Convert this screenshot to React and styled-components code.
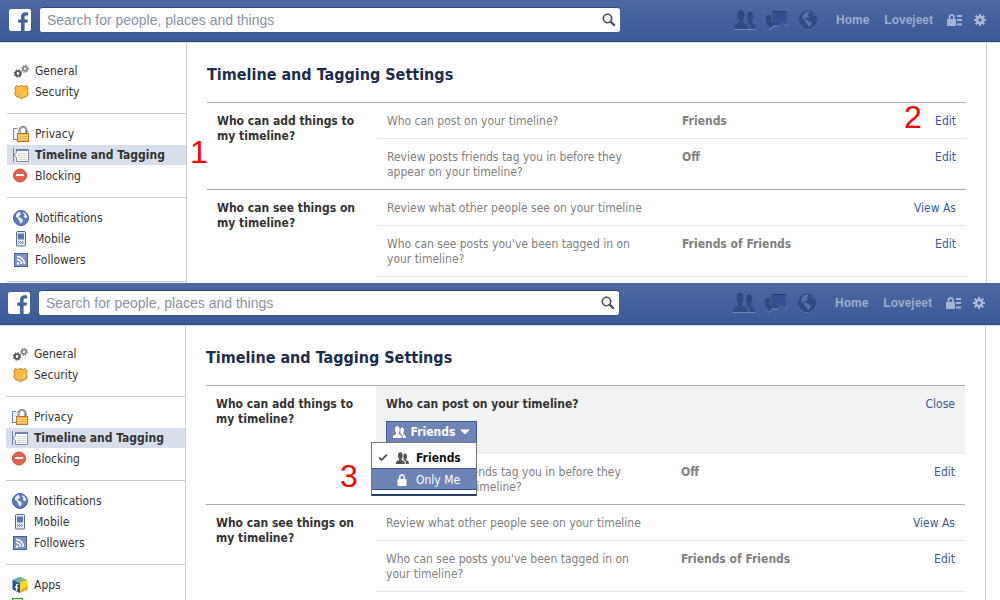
import { useState } from 'react';
import styled, { createGlobalStyle, css } from 'styled-components';

const GlobalStyle = createGlobalStyle`
  * {
    box-sizing: border-box;
  }
  body {
    margin: 0;
    background: #fff;
    color: #333;
    font-family: 'DejaVu Sans Condensed', 'DejaVu Sans', sans-serif;
    font-size: 12px;
    line-height: 15px;
  }
  a {
    color: #3b5998;
    text-decoration: none;
  }
  svg {
    display: block;
    flex: none;
  }
`;

const Page = styled.div`
  height: 100vh;
  overflow: hidden;
`;

const Pane = styled.section`
  position: relative;
`;

const Header = styled.header`
  display: flex;
  align-items: center;
  height: 42px;
  padding: 0 ${(props) => props.$right}px 1px ${(props) => props.$left}px;
  background: linear-gradient(#4e69a2, #3b5998);
  border-bottom: 1px solid #29487d;
  box-shadow: 0 1px 0 #dcdfe8;
`;

const LogoLink = styled.a`
  display: block;
  width: 22px;
  height: 22px;
  margin-right: 9px;
  border-radius: 2px;
  overflow: hidden;
`;

const SearchForm = styled.form`
  display: flex;
  flex: 0 1 580px;
  height: 26px;
  background: #fff;
  border-top: 1px solid #2c467e;
  border-bottom: 1px solid #3b5590;
  border-radius: 3px;
`;

const SearchInput = styled.input`
  flex: 1;
  min-width: 0;
  padding: 0 7px;
  border: 0;
  outline: 0;
  background: none;
  font-family: 'Liberation Sans', Arial, sans-serif;
  font-size: 14px;
  &::placeholder {
    color: #8a92a3;
    opacity: 1;
  }
`;

const SearchButton = styled.button`
  display: flex;
  align-items: center;
  padding: 0 4px;
  border: 0;
  background: none;
  cursor: pointer;
`;

const TopNav = styled.nav`
  display: flex;
  align-items: center;
  margin-left: auto;
`;

const Jewels = styled.div`
  display: flex;
  align-items: center;
  gap: 10px;
  margin-right: 18px;
`;

const NavLinks = styled.div`
  display: flex;
  align-items: center;
  gap: 15px;
  margin-right: 14px;
`;

const NavTools = styled.div`
  display: flex;
  align-items: center;
  gap: 12px;
`;

const NavLink = styled.a`
  color: #9cacce;
  font-family: 'Liberation Sans', Arial, sans-serif;
  font-weight: bold;
`;

const IconLink = styled.a`
  display: block;
`;

const Body = styled.div`
  display: flex;
  margin-right: ${(props) => props.$right}px;
  padding-left: ${(props) => props.$left}px;
  border-right: 1px solid #ccc;
`;

const Sidebar = styled.nav`
  flex: 0 0 180px;
  padding: 9px 0 1px;
  border-right: 1px solid #ccc;
`;

const SideGroup = styled.ul`
  display: flex;
  flex-direction: column;
  gap: 1px;
  margin: 0;
  padding: 10px 0 11px;
  border-bottom: 1px solid #ccc;
  list-style: none;
`;

const SideLink = styled.a`
  display: flex;
  align-items: center;
  gap: 6px;
  height: 20px;
  padding-left: 6px;
  color: #333;
  ${(props) =>
    props.$active &&
    css`
      background: #d8dfea;
      font-weight: bold;
    `}
`;

const Main = styled.main`
  flex: 1;
  min-width: 0;
  padding: 23px 20px 0;
`;

const Title = styled.h1`
  margin: 0 0 17px;
  color: #1e2d4c;
  font-size: 16px;
  line-height: 20px;
`;

const Group = styled.section`
  display: flex;
  border-top: 1px solid #aaa;
`;

const GroupTitle = styled.h2`
  flex: 0 0 170px;
  margin: 0;
  padding: 11px 10px 0;
  font-size: 12px;
  line-height: 15px;
`;

const Rows = styled.div`
  flex: 1;
  min-width: 0;
`;

const Row = styled.div`
  display: grid;
  grid-template-columns: 265px 1fr auto;
  column-gap: 30px;
  padding: 11px 10px 9px;
  color: #808080;
  & + & {
    border-top: 1px solid #e9e9e9;
  }
`;

const LastLine = styled.div`
  border-top: 1px solid #e9e9e9;
`;

const Value = styled.strong`
  color: #808080;
`;

const OpenRow = styled.div`
  padding: 11px 10px 10px;
  background: #f2f2f2;
  border-bottom: 1px solid #e9e9e9;
`;

const OpenHead = styled.div`
  display: flex;
  justify-content: space-between;
  margin-bottom: 9px;
`;

const Audience = styled.div`
  position: relative;
  width: 91px;
`;

const AudienceButton = styled.button`
  display: flex;
  align-items: center;
  justify-content: space-between;
  width: 100%;
  height: 22px;
  padding: 0 6px;
  border: 1px solid #3b5998;
  background: #6d84b4;
  color: #fff;
  font: inherit;
  font-weight: bold;
  cursor: pointer;
`;

const Menu = styled.div`
  position: absolute;
  z-index: 2;
  top: 21px;
  right: 0;
  width: 106px;
  padding: 3px 0 4px;
  border: 1px solid #777;
  border-bottom: 2px solid #293e6a;
  background: #fff;
`;

const MenuItem = styled.button`
  display: grid;
  grid-template-columns: 10px 13px 1fr;
  column-gap: 7px;
  align-items: center;
  width: 100%;
  height: 22px;
  padding: 2px 0 0 7px;
  border: 1px solid transparent;
  border-width: 1px 0;
  background: none;
  color: #555;
  font: inherit;
  font-weight: ${(props) => (props.$checked ? 'bold' : 'normal')};
  text-align: left;
  cursor: pointer;
  ${(props) =>
    props.$hot &&
    css`
      border-color: #3b5998;
      background: #6d84b4;
      color: #fff;
    `}
`;

const MenuLabel = styled.span`
  color: ${(props) => (props.$hot ? '#fff' : '#111')};
`;

const Step = styled.span`
  position: absolute;
  z-index: 3;
  top: ${(props) => props.$top}px;
  left: ${(props) => props.$left};
  color: #f00;
  font-family: 'Liberation Sans', Arial, sans-serif;
  font-size: 32px;
  line-height: 32px;
`;

const LogoIcon = () => (
  <svg width='22' height='22' viewBox='0 0 22 22'>
    <rect width='22' height='22' rx='1' fill='#fff' />
    <path
      d='M12 22v-8.200H9.200v-3.300H12V8c0-3 1.700-4.700 4.500-4.700h2.500v3.300h-1.700c-1.300 0-1.700.6-1.700 1.700v2.200h3.300l-.5 3.300h-2.800V22z'
      fill='#4561a0'
    />
  </svg>
);

const SearchIcon = () => (
  <svg width='14' height='14' viewBox='0 0 14 14' fill='none' stroke='#4a4a4a'>
    <circle cx='5.500' cy='5.500' r='4.200' strokeWidth='1.600' />
    <path d='M8.800 8.800l4 4' strokeWidth='2.200' />
  </svg>
);

const FriendsJewel = () => (
  <svg width='22' height='20' viewBox='0 0 22 20'>
    <path d='M0 19.500h22' stroke='#6f86b8' />
    <g fill='#304a86'>
      <path d='M13.500 12.500c0-1.100 1-1.300 1.200-2-1.200-1-1.700-2.400-1.700-4 0-2.500 1.300-4.500 3.200-4.500s3.200 2 3.200 4.500c0 1.600-.5 3-1.600 4v2c1.100 1.400 4.200 1.700 4.200 4.500v2h-5c0-3-.6-4.600-3.500-6.500z' />
      <path d='M0 19v-2c0-3 3.600-3.300 5-4.800v-2.400C4 8.800 3.500 7.200 3.500 5c0-3 1.300-4.500 3.500-4.500S10.500 2 10.500 5c0 2.200-.5 3.800-1.500 4.800v2.400c1.400 1.500 5.200 1.800 5.200 4.800v2z' />
    </g>
    <path d='M4.500 2Q5.500 .7 7 .7t2.500 1.300M14 3.500q1-1.200 2.200-1.200t2.200 1.200' fill='none' stroke='#24396c' />
  </svg>
);

const ChatJewel = () => (
  <svg width='22' height='20' viewBox='0 0 22 20'>
    <path d='M3 19.500l5-3.500h5M17 13l4 3.500V13' fill='none' stroke='#6f86b8' />
    <path
      d='M1.500 5.500H5v7h9V15H7.500L3 19v-4H1.500Q0 15 0 13.500V7Q0 5.500 1.500 5.500z'
      fill='#304a86'
    />
    <path
      d='M7.500 1h12Q21 1 21 2.500v8q0 1.500-.5 1.500v4L16 12.500H7.500Q6 12.500 6 11V2.500Q6 1 7.500 1z'
      fill='#34508e'
    />
    <path d='M6.500 1.500h14M.5 6H5' stroke='#24396c' />
  </svg>
);

const GlobeJewel = () => (
  <svg width='20' height='20' viewBox='0 0 20 20'>
    <circle cx='10' cy='10.500' r='9.200' fill='#6f86b8' />
    <circle cx='10' cy='9.800' r='9.300' fill='#304a86' />
    <path
      d='M5 4.500L8 2l3.500-.6-.5 2L9.500 5 11 6.500 9 8 7 7.500 6.500 9l2.700.8 1.300 1.300 3.300 1.200-.8 3-2.200 1.700-1.600-3.100-2-2.200.4-1.200-3.100-2z'
      fill='#5a74ad'
    />
    <path d='M14 2.800l3 3' stroke='#5a74ad' />
  </svg>
);

const LockListIcon = () => (
  <svg width='15' height='12' viewBox='0 0 15 12'>
    <path d='M2.500 5.500V3.500a2.200 2.500 0 0 1 4.500 0v2' fill='none' stroke='#a5b3d2' strokeWidth='1.700' />
    <path d='M0 5h9v7H0zM10 1h5v2h-5zM10 5h5v2h-5zM10 9.500h5v2h-5z' fill='#a5b3d2' />
  </svg>
);

const GearIcon = () => (
  <svg width='12' height='12' viewBox='0 0 12 12' fill='none' stroke='#b0bcd8'>
    <circle cx='6' cy='6' r='2.900' strokeWidth='2.200' />
    <path
      d='M6 0v2.500M6 9.500V12M0 6h2.500M9.500 6H12M1.700 1.700l1.800 1.800M8.500 8.500l1.800 1.800M10.300 1.700L8.500 3.500M3.500 8.500l-1.800 1.800'
      strokeWidth='2'
    />
  </svg>
);

const GeneralIcon = () => (
  <svg width='16' height='16' viewBox='0 0 16 16' fill='none'>
    <g stroke='#555'>
      <circle cx='5' cy='10.500' r='2.300' strokeWidth='1.800' />
      <circle cx='5' cy='10.500' r='3.500' strokeWidth='1.400' strokeDasharray='1.400 1.350' />
    </g>
    <g stroke='#888'>
      <circle cx='12' cy='5.800' r='2.100' strokeWidth='1.800' />
      <circle cx='12' cy='5.800' r='3.300' strokeWidth='1.300' strokeDasharray='1.300 1.290' />
    </g>
  </svg>
);

const SecurityIcon = () => (
  <svg width='16' height='16' viewBox='0 0 16 16'>
    <path
      d='M3.500 1.500l2 1 3-1 3 1 2-1 1.700 2.800-.9 2.200.9 3.500-1.500 2.500-3.200.9-2 1.600-2-1.600-3.200-.9-1.500-2.500.9-3.500-.9-2.200z'
      fill='#fbb83c'
      stroke='#c08433'
    />
    <path d='M9 12l4-6.500v5z' fill='#fdd374' />
  </svg>
);

const PrivacyIcon = () => (
  <svg width='16' height='16' viewBox='0 0 16 16'>
    <path d='M4.500 2.500h-4v11h4' fill='#eef2fa' stroke='#6d84b4' />
    <path d='M6.500 8V4.500a3.500 3.500 0 0 1 7 0V8' fill='none' stroke='#666' strokeWidth='2' />
    <path d='M6.500 7.500V4.500a3.500 3.500 0 0 1 7 0' fill='none' stroke='#ddd' strokeWidth='.7' />
    <rect x='4.500' y='7.500' width='11' height='8' fill='#fcb53a' stroke='#b5762b' />
    <path d='M5 9.500h10M5 11.500h10M5 13.500h10' stroke='#fbd583' />
  </svg>
);

const TimelineIcon = () => (
  <svg width='16' height='16' viewBox='0 0 16 16'>
    <path d='M.5 1v14' stroke='#6d84b4' />
    <path d='M3.500 2.500h12v12h-12v-4L1 8l2.500-2.500z' fill='#fff' stroke='#8a8a8a' />
    <path d='M3 3h13' stroke='#6d84b4' strokeWidth='2' />
    <path d='M5 6.500h9M5 8.500h9M5 10.500h9M5 12.500h9' stroke='#d5d5d5' />
  </svg>
);

const BlockingIcon = () => (
  <svg width='16' height='16' viewBox='0 0 16 16'>
    <circle cx='7' cy='7.500' r='6.500' fill='#e2604b' stroke='#cb4a3c' />
    <rect x='3' y='6' width='8' height='2' fill='#fff' />
  </svg>
);

const NotificationsIcon = () => (
  <svg width='16' height='16' viewBox='0 0 16 16'>
    <circle cx='8' cy='8' r='7.500' fill='#5f7ab5' stroke='#47619f' />
    <path
      d='M3 4.500L5 2.500l2.500-.8L7 3l1.200 1.200-2 1.800-.7 1.300 2.300.8 2 1.600-.3 1.800-2 2.500-1-3-1.200-1.700L5 8 3 7zM10.500 2L13 4l1.300 3-1.500 1.500L11 7l.3-2.500-1.300-1z'
      fill='#e9eef8'
    />
  </svg>
);

const MobileIcon = () => (
  <svg width='16' height='16' viewBox='0 0 16 16'>
    <rect x='3.500' y='.5' width='9' height='14.500' rx='1' fill='#e8edf6' stroke='#53698f' />
    <rect x='5' y='2.500' width='6' height='6' fill='#5c7ab8' />
    <path d='M5 10.500h6M5 12.500h6' stroke='#7184a8' strokeDasharray='1 1' />
    <path d='M6 11.500h5' stroke='#7184a8' strokeDasharray='1 1' />
  </svg>
);

const FollowersIcon = () => (
  <svg width='16' height='16' viewBox='0 0 16 16'>
    <rect x='1.500' y='1.500' width='13' height='13' fill='#7d92c0' stroke='#4a629c' />
    <circle cx='5' cy='11.500' r='1.300' fill='#fff' />
    <path d='M4 7.500a4.500 4.500 0 0 1 4.500 4.500M4 4.500a7.500 7.500 0 0 1 7.500 7.500' fill='none' stroke='#fff' strokeWidth='1.600' />
  </svg>
);

const AppsIcon = () => (
  <svg width='16' height='16' viewBox='0 0 16 16'>
    <path d='M8 0l7.500 3L8 6 .5 3z' fill='#7fc241' />
    <path d='M8 0L.5 3l4 1.600L11 1.200z' fill='#4fa8d8' />
    <path d='M.5 3L8 6v10l-7.500-3.500z' fill='#2f4f93' />
    <path d='M15.500 3L8 6v10l7.500-3.500z' fill='#fbd91c' />
    <path d='M15.500 8.500v4L8 16v-2z' fill='#f2a81d' />
    <path d='M6.300 7.500q-1.800-.6-1.800 1.300v5M3 9.800l3 1' fill='none' stroke='#fff' strokeWidth='1.300' />
  </svg>
);

const AdsIcon = () => (
  <svg width='16' height='16' viewBox='0 0 16 16'>
    <rect x='.5' y='.5' width='10' height='14' fill='#d5edc2' stroke='#3f8f2b' />
    <path d='M3 4h5M3 7h5M3 10h5' stroke='#3f8f2b' />
  </svg>
);

const FriendsIcon = () => (
  <svg width='13' height='12' viewBox='0 0 13 12' fill='currentColor'>
    <path d='M0 12v-1.500c0-1.500 2-1.600 3-2.500V6.700C2.300 6 2 5 2 3.500 2 1.500 2.800.3 4.300.3S6.600 1.500 6.600 3.500C6.600 5 6.300 6 5.600 6.700V8c1 .9 3.200 1 3.200 2.500V12z' />
    <path d='M7.300 7.500l.5-.5c-.5-.6-.4-1-.4-2.500 0-1.700.5-2.900 1.700-2.900s1.900 1 1.900 2.900c0 1.400-.3 2-.8 2.600V8c.8.8 2.600 1 2.600 2.400V12H9.800v-1.500C9.800 9 8.600 8.500 7.300 7.500z' />
  </svg>
);

const LockIcon = () => (
  <svg width='13' height='12' viewBox='0 0 13 12'>
    <path d='M3.700 6V3.500a2.300 2.500 0 0 1 4.600 0V6' fill='none' stroke='currentColor' strokeWidth='1.500' />
    <rect x='1.500' y='5' width='9' height='7' rx='1' fill='currentColor' />
  </svg>
);

const CheckIcon = () => (
  <svg width='10' height='9' viewBox='0 0 10 9' fill='none' stroke='#555' strokeWidth='1.800'>
    <path d='M0 3.500L2.500 6 8 .5' />
  </svg>
);

const CaretIcon = () => (
  <svg width='10' height='6' viewBox='0 0 10 6'>
    <path d='M0 .5h10L5 5.500z' fill='#fff' />
  </svg>
);

const sideGroups = [
  [
    { id: 'general', label: 'General', Icon: GeneralIcon },
    { id: 'security', label: 'Security', Icon: SecurityIcon },
  ],
  [
    { id: 'privacy', label: 'Privacy', Icon: PrivacyIcon },
    { id: 'tagging', label: 'Timeline and Tagging', Icon: TimelineIcon },
    { id: 'blocking', label: 'Blocking', Icon: BlockingIcon },
  ],
  [
    { id: 'notifications', label: 'Notifications', Icon: NotificationsIcon },
    { id: 'mobile', label: 'Mobile', Icon: MobileIcon },
    { id: 'followers', label: 'Followers', Icon: FollowersIcon },
  ],
];

const moreGroup = [
  { id: 'apps', label: 'Apps', Icon: AppsIcon },
  { id: 'ads', Icon: AdsIcon },
];

const audiences = [
  { id: 'friends', label: 'Friends', Icon: FriendsIcon },
  { id: 'me', label: 'Only Me', Icon: LockIcon },
];

const TopBar = ({ left, right }) => (
  <Header $left={left + 2} $right={right + 1}>
    <LogoLink href='#' aria-label='Facebook'>
      <LogoIcon />
    </LogoLink>
    <SearchForm onSubmit={(e) => e.preventDefault()}>
      <SearchInput
        type='text'
        aria-label='Search'
        placeholder='Search for people, places and things'
      />
      <SearchButton type='submit' aria-label='Search'>
        <SearchIcon />
      </SearchButton>
    </SearchForm>
    <TopNav>
      <Jewels>
        <IconLink href='#' aria-label='Friend requests'>
          <FriendsJewel />
        </IconLink>
        <IconLink href='#' aria-label='Messages'>
          <ChatJewel />
        </IconLink>
        <IconLink href='#' aria-label='Notifications'>
          <GlobeJewel />
        </IconLink>
      </Jewels>
      <NavLinks>
        <NavLink href='#'>Home</NavLink>
        <NavLink href='#'>Lovejeet</NavLink>
      </NavLinks>
      <NavTools>
        <IconLink href='#' aria-label='Privacy shortcuts'>
          <LockListIcon />
        </IconLink>
        <IconLink href='#' aria-label='Settings'>
          <GearIcon />
        </IconLink>
      </NavTools>
    </TopNav>
  </Header>
);

const SideMenu = ({ groups }) => (
  <Sidebar>
    {groups.map((group) => (
      <SideGroup key={group[0].id}>
        {group.map(({ id, label, Icon }) => (
          <li key={id}>
            <SideLink href='#' aria-label={label || id} $active={id === 'tagging'}>
              <Icon />
              {label}
            </SideLink>
          </li>
        ))}
      </SideGroup>
    ))}
  </Sidebar>
);

const Setting = ({ text, value, action = 'Edit' }) => (
  <Row>
    <span>{text}</span>
    <Value>{value}</Value>
    <a href='#'>{action}</a>
  </Row>
);

const AudiencePicker = () => {
  const [open, setOpen] = useState(true);
  const [selected, setSelected] = useState('friends');
  const [hot, setHot] = useState('me');
  const current = audiences.find((item) => item.id === selected);

  const handlePick = (id) => {
    setSelected(id);
    setOpen(false);
  };

  return (
    <Audience>
      <AudienceButton
        type='button'
        aria-haspopup='menu'
        aria-expanded={open}
        onClick={() => setOpen(!open)}
      >
        <current.Icon />
        {current.label}
        <CaretIcon />
      </AudienceButton>
      {open && (
        <Menu role='menu'>
          {audiences.map(({ id, label, Icon }) => (
            <MenuItem
              key={id}
              type='button'
              role='menuitemradio'
              aria-checked={id === selected}
              $checked={id === selected}
              $hot={id === hot}
              onMouseEnter={() => setHot(id)}
              onClick={() => handlePick(id)}
            >
              <span>{id === selected && <CheckIcon />}</span>
              <Icon />
              <MenuLabel $hot={id === hot}>{label}</MenuLabel>
            </MenuItem>
          ))}
        </Menu>
      )}
    </Audience>
  );
};

const SettingsPane = ({ left, right, groups, editing, children }) => (
  <Pane>
    <TopBar left={left} right={right} />
    <Body $left={left} $right={right}>
      <SideMenu groups={groups} />
      <Main>
        <Title>Timeline and Tagging Settings</Title>
        <Group>
          <GroupTitle>Who can add things to my timeline?</GroupTitle>
          <Rows>
            {editing ? (
              <OpenRow>
                <OpenHead>
                  <strong>Who can post on your timeline?</strong>
                  <a href='#'>Close</a>
                </OpenHead>
                <AudiencePicker />
              </OpenRow>
            ) : (
              <Setting text='Who can post on your timeline?' value='Friends' />
            )}
            <Setting
              text='Review posts friends tag you in before they appear on your timeline?'
              value='Off'
            />
          </Rows>
        </Group>
        <Group>
          <GroupTitle>Who can see things on my timeline?</GroupTitle>
          <Rows>
            <Setting
              text='Review what other people see on your timeline'
              action='View As'
            />
            <Setting
              text={"Who can see posts you've been tagged in on your timeline?"}
              value='Friends of Friends'
            />
            <LastLine />
          </Rows>
        </Group>
      </Main>
    </Body>
    {children}
  </Pane>
);

const App = () => (
  <>
    <GlobalStyle />
    <Page>
      <SettingsPane left={7} right={13} groups={sideGroups}>
        <Step $top={136} $left='190px'>
          1
        </Step>
        <Step $top={101} $left='904px'>
          2
        </Step>
      </SettingsPane>
      <SettingsPane
        left={6}
        right={14}
        groups={[...sideGroups, moreGroup]}
        editing
      >
        <Step $top={177} $left='340px'>
          3
        </Step>
      </SettingsPane>
    </Page>
  </>
);

export default App;
